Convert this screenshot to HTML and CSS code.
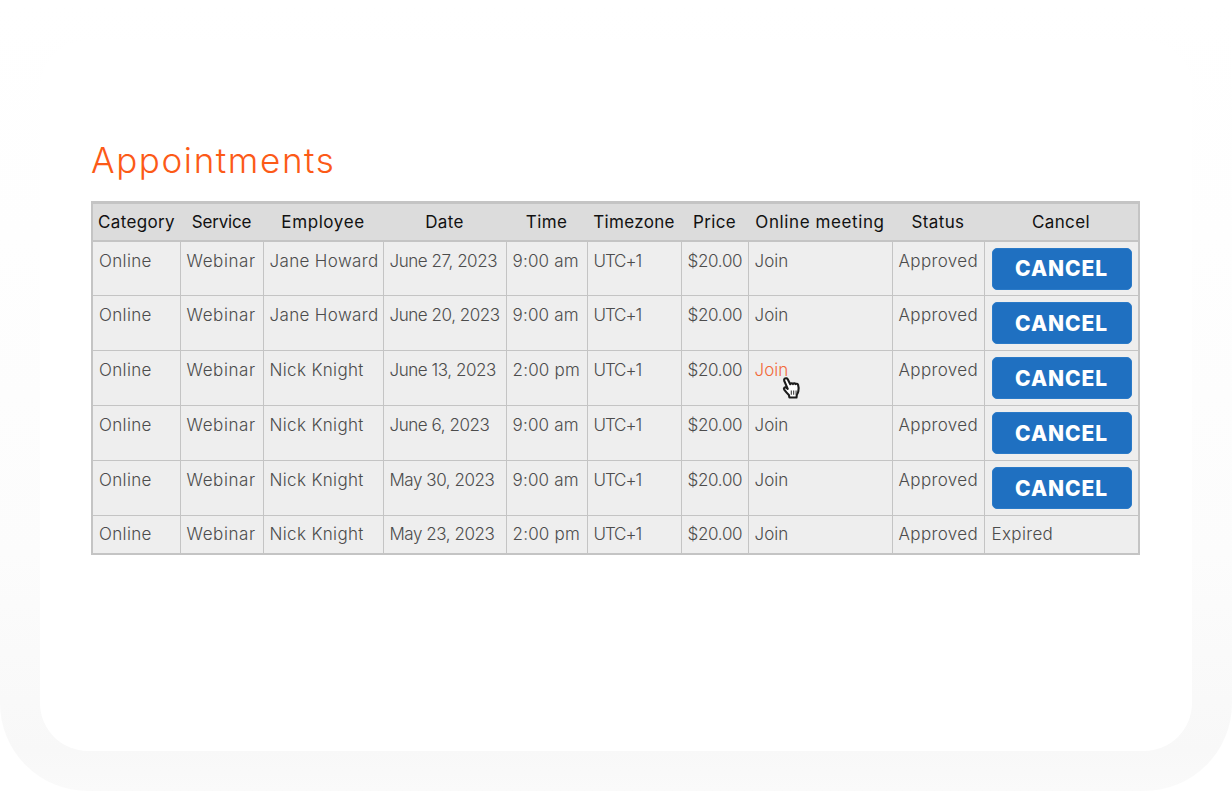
FILE: index.html
```html
<!DOCTYPE html>
<html lang="en">
<head>
<meta charset="utf-8">
<title>Appointments</title>
<link rel="stylesheet" href="styles.css">
</head>
<body>
<div class="frame">
  <main class="panel">
    <h1 class="title">Appointments</h1>
    <table class="grid">
      <colgroup>
        <col class="c1"><col class="c2"><col class="c3"><col class="c4"><col class="c5"><col class="c6"><col class="c7"><col class="c8"><col class="c9"><col class="c10">
      </colgroup>
      <thead>
        <tr><th>Category</th><th>Service</th><th>Employee</th><th>Date</th><th>Time</th><th>Timezone</th><th>Price</th><th>Online meeting</th><th>Status</th><th>Cancel</th></tr>
      </thead>
      <tbody>
        <tr class="tall"><td>Online</td><td>Webinar</td><td>Jane Howard</td><td>June 27, 2023</td><td>9:00 am</td><td>UTC+1</td><td>$20.00</td><td>Join</td><td>Approved</td><td class="act"><button class="btn">CANCEL</button></td></tr>
        <tr class="tall"><td>Online</td><td>Webinar</td><td>Jane Howard</td><td>June 20, 2023</td><td>9:00 am</td><td>UTC+1</td><td>$20.00</td><td>Join</td><td>Approved</td><td class="act"><button class="btn">CANCEL</button></td></tr>
        <tr class="tall"><td>Online</td><td>Webinar</td><td>Nick Knight</td><td>June 13, 2023</td><td>2:00 pm</td><td>UTC+1</td><td>$20.00</td><td class="hover"><span class="join">Join</span><svg class="cursor" viewBox="0 0 20 24" width="21" height="25" aria-hidden="true"><path d="M3.500 2.500c1-.8 2.400-.3 3 .8l2.300 4.600c.4-1 2-1.200 2.600-.1.400-.9 2-1 2.500 0 .6-.6 2-.4 2.400.7.600 1.700.7 4.300.2 6.300-.3 1.300-.8 2.300-1.400 3.200l-.3 2.700H8l-.5-2.400c-1-1-2.900-3.200-4.500-5.300-.8-1.100.5-2.700 1.900-1.800l1.500 1.100L3 4.600c-.3-.8 0-1.600.5-2.100z" fill="#fff" stroke="#1c1c1c" stroke-width="2" stroke-linejoin="round"/><path d="M9.800 14v4M12.100 14v4M14.400 14v4" stroke="#333" stroke-width="1" fill="none"/></svg></td><td>Approved</td><td class="act"><button class="btn">CANCEL</button></td></tr>
        <tr class="tall"><td>Online</td><td>Webinar</td><td>Nick Knight</td><td>June 6, 2023</td><td>9:00 am</td><td>UTC+1</td><td>$20.00</td><td>Join</td><td>Approved</td><td class="act"><button class="btn">CANCEL</button></td></tr>
        <tr class="tall"><td>Online</td><td>Webinar</td><td>Nick Knight</td><td>May 30, 2023</td><td>9:00 am</td><td>UTC+1</td><td>$20.00</td><td>Join</td><td>Approved</td><td class="act"><button class="btn">CANCEL</button></td></tr>
        <tr class="short"><td>Online</td><td>Webinar</td><td>Nick Knight</td><td>May 23, 2023</td><td>2:00 pm</td><td>UTC+1</td><td>$20.00</td><td>Join</td><td>Approved</td><td class="late">Expired</td></tr>
      </tbody>
    </table>
  </main>
</div>
</body>
</html>
```
FILE: styles.css
```css
* { box-sizing: border-box; }
html, body { margin: 0; padding: 0; background: #fff; }
body { font-family: Inter, "Liberation Sans", sans-serif; overflow: hidden; }
.frame {
  width: 1232px;
  height: 791px;
  padding: 40px;
  border-radius: 0 0 88px 88px;
  background: linear-gradient(#fff 0, #fefefe 30%, #fcfcfc 70%, #f8f8f8 95%, #fafafa 100%);
}
.panel {
  height: 711px;
  padding: 100px 52px 0 51px;
  background: #fff;
  border-radius: 48px;
}
.title {
  margin: 0 0 20px;
  font-size: 35px;
  line-height: 41px;
  font-weight: 300;
  letter-spacing: 1.6px;
  color: #fc5a17;
}
.grid {
  table-layout: fixed;
  width: 1047px;
  border-collapse: collapse;
  border-top: 3px solid #c4c4c4;
  border-left: 2px solid #c4c4c4;
  border-right: 2px solid #c4c4c4;
  border-bottom: 2px solid #c4c4c4;
  font-size: 17px;
  letter-spacing: 0.35px;
}
.c1 { width: 88px; } .c2 { width: 83px; } .c3 { width: 120px; } .c4 { width: 123px; } .c5 { width: 81px; }
.c6 { width: 94px; } .c7 { width: 67px; } .c8 { width: 144px; } .c9 { width: 92px; } .c10 { width: 155px; }
.grid th {
  height: 38px;
  padding: 0;
  background: #dcdcdc;
  color: #111;
  font-weight: 400;
  text-align: center;
  border-bottom: 2px solid #c4c4c4;
}
.grid th:nth-child(2) { letter-spacing: -0.2px; }
.grid th:nth-child(3), .grid th:nth-child(8) { letter-spacing: 0.6px; }
.grid td {
  padding: 9px 6px 0 6px;
  vertical-align: top;
  background: #eee;
  color: #4c4c4c;
  font-weight: 300;
  line-height: 20px;
  white-space: nowrap;
  border: 1.5px solid #c4c4c4;
}
.grid td:nth-child(2) { letter-spacing: 0.6px; }
.grid td:nth-child(4) { letter-spacing: -0.45px; }
.grid td:nth-child(5) { letter-spacing: 0.2px; }
.grid td:nth-child(6) { letter-spacing: -1.1px; }
.grid td:nth-child(7) { letter-spacing: -0.3px; }
.grid td:nth-child(8) { letter-spacing: 0; }
.tall td { height: 55px; }
.short td { height: 38px; padding-top: 8px; }
.grid td.act { padding: 6px 6px 0 7px; }
.grid td.late { padding-left: 7px; }
.btn {
  display: block;
  width: 140px;
  height: 42px;
  padding: 0;
  border: 1px solid #2a7ac8;
  border-radius: 5px;
  background: #1f70c1;
  color: #fff;
  font: 800 21px/1 Inter, "Liberation Sans", sans-serif;
  letter-spacing: 0.9px;
}
.hover { position: relative; }
.join { color: #f26a3a; }
.cursor { position: absolute; left: 32px; top: 25px; }
```
